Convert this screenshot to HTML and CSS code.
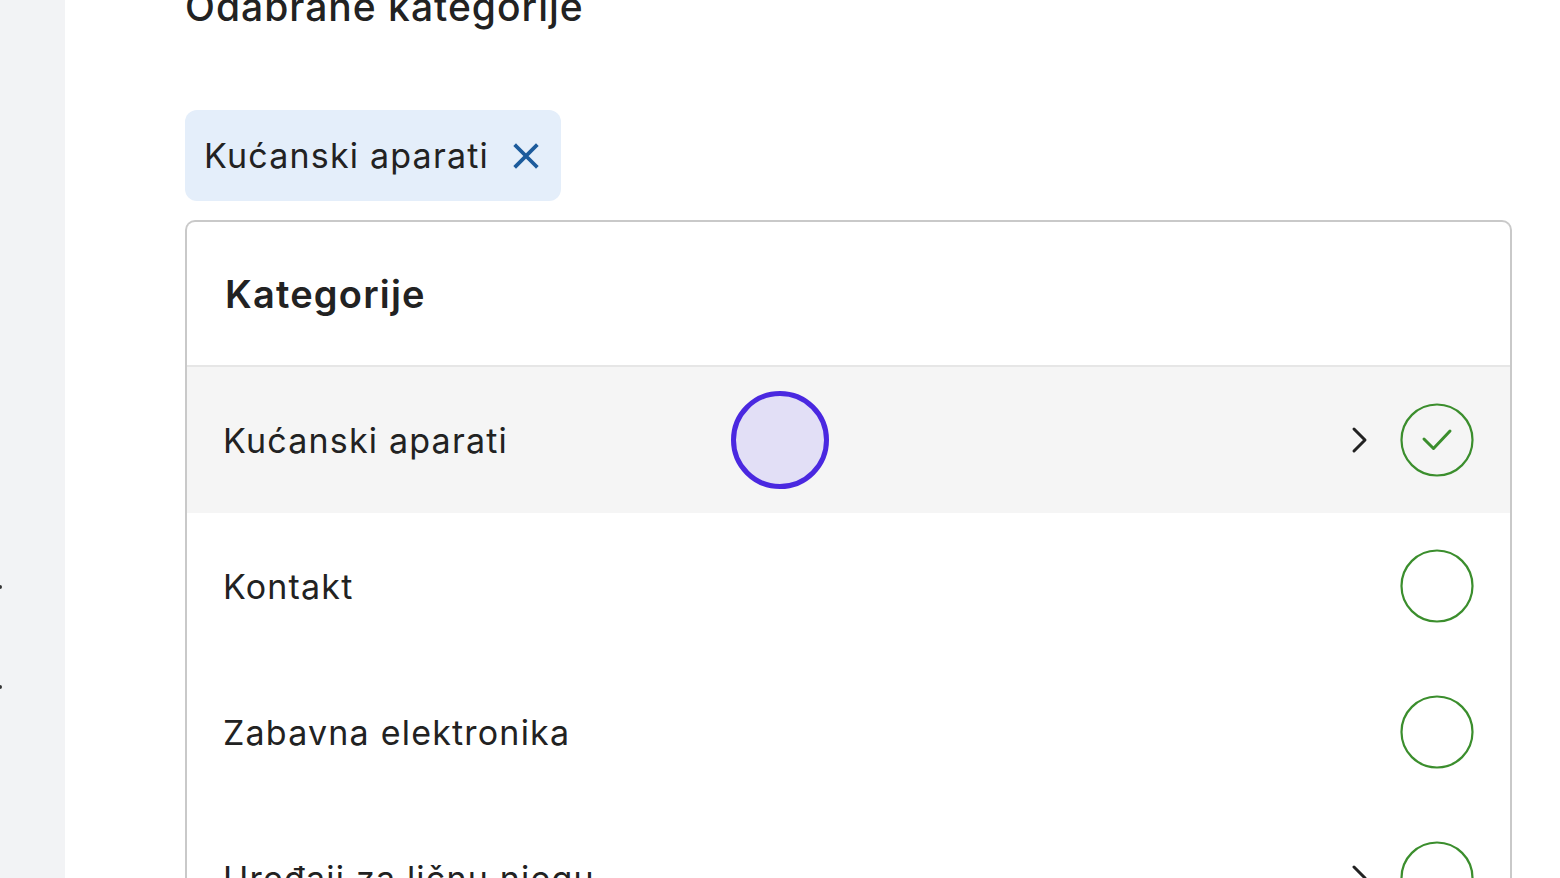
FILE: index.html
```html
<!DOCTYPE html>
<html lang="hr">
<head>
<meta charset="utf-8">
<title>Odabrane kategorije</title>
<link rel="stylesheet" href="styles.css">
</head>
<body>
<div class="app">
  <aside class="sidebar">
    <span class="dot dot-a"></span>
    <span class="dot dot-b"></span>
  </aside>
  <main class="main">
    <h1 class="page-title">Odabrane kategorije</h1>
    <div class="chips">
      <div class="chip">
        <span class="chip-label">Kućanski aparati</span>
        <svg class="chip-x" width="26" height="26" viewBox="0 0 26 26"><path d="M3 3L23 23M23 3L3 23" stroke="#1c5b9c" stroke-width="3.8" stroke-linecap="square" fill="none"/></svg>
      </div>
    </div>
    <section class="card">
      <header class="card-head">Kategorije</header>
      <ul class="list">
        <li class="row row-active">
          <span class="row-label">Kućanski aparati</span>
          <span class="row-tools">
            <svg class="chev" width="20" height="28" viewBox="0 0 20 28"><path d="M4 3L15 14L4 25" stroke="#222" stroke-width="3" fill="none" stroke-linecap="round" stroke-linejoin="round"/></svg>
            <svg class="radio" width="74" height="74" viewBox="0 0 74 74"><circle cx="37" cy="37" r="35.5" stroke="#3b8e2d" stroke-width="2.2" fill="none"/><path d="M24 36L33.5 45.5L50 28" stroke="#3b8e2d" stroke-width="3" fill="none" stroke-linecap="round" stroke-linejoin="round"/></svg>
          </span>
          <span class="cursor"></span>
        </li>
        <li class="row">
          <span class="row-label">Kontakt</span>
          <span class="row-tools">
            <svg class="radio" width="74" height="74" viewBox="0 0 74 74"><circle cx="37" cy="37" r="35.5" stroke="#3b8e2d" stroke-width="2.2" fill="none"/></svg>
          </span>
        </li>
        <li class="row">
          <span class="row-label">Zabavna elektronika</span>
          <span class="row-tools">
            <svg class="radio" width="74" height="74" viewBox="0 0 74 74"><circle cx="37" cy="37" r="35.5" stroke="#3b8e2d" stroke-width="2.2" fill="none"/></svg>
          </span>
        </li>
        <li class="row">
          <span class="row-label">Uređaji za ličnu njegu</span>
          <span class="row-tools">
            <svg class="chev" width="20" height="28" viewBox="0 0 20 28"><path d="M4 3L15 14L4 25" stroke="#222" stroke-width="3" fill="none" stroke-linecap="round" stroke-linejoin="round"/></svg>
            <svg class="radio" width="74" height="74" viewBox="0 0 74 74"><circle cx="37" cy="37" r="35.5" stroke="#3b8e2d" stroke-width="2.2" fill="none"/></svg>
          </span>
        </li>
      </ul>
    </section>
  </main>
</div>
</body>
</html>
```
FILE: styles.css
```css
html, body {
  margin: 0;
  padding: 0;
  height: 100%;
  overflow: hidden;
  background: #ffffff;
}
body {
  font-family: Inter, "Noto Sans", "Liberation Sans", sans-serif;
  color: #222222;
}
.app {
  display: flex;
  height: 878px;
}
.sidebar {
  width: 65px;
  flex: none;
  background: #f2f3f5;
  position: relative;
}
.dot {
  position: absolute;
  left: -2px;
  width: 4px;
  height: 4px;
  border-radius: 50%;
  background: #333;
}
.dot-a { top: 585px; }
.dot-b { top: 685px; }
.main {
  flex: 1;
  padding: 0 48px 0 120px;
  min-width: 0;
}
.page-title {
  margin: -16px 0 0 0;
  font-size: 39px;
  line-height: 46px;
  font-weight: 500;
  letter-spacing: 1px;
  color: #222;
}
.chips {
  display: flex;
  margin-top: 80px;
}
.chip {
  display: flex;
  align-items: center;
  gap: 24px;
  height: 91px;
  padding: 0 22px 0 19px;
  background: #e4eefa;
  border-radius: 12px;
  box-sizing: border-box;
}
.chip-label {
  font-size: 34px;
  letter-spacing: 1.2px;
  color: #222;
}
.card {
  margin-top: 19px;
  border: 2px solid #c9c9c9;
  border-radius: 10px;
  border-bottom: none;
  border-bottom-left-radius: 0;
  border-bottom-right-radius: 0;
  overflow: hidden;
}
.card-head {
  height: 143px;
  display: flex;
  align-items: center;
  padding-left: 38px;
  font-size: 38px;
  font-weight: 600;
  letter-spacing: 1.2px;
  color: #222;
  border-bottom: 2px solid #e6e6e6;
}
.list {
  list-style: none;
  margin: 0;
  padding: 0;
}
.row {
  height: 146px;
  display: flex;
  align-items: center;
  justify-content: space-between;
  padding: 0 36px 0 36px;
  position: relative;
}
.row-active {
  background: #f5f5f5;
}
.row-label {
  font-size: 34px;
  letter-spacing: 1.2px;
  color: #222;
}
.row-tools {
  display: flex;
  align-items: center;
  gap: 30px;
}
.chev, .radio {
  display: block;
}
.cursor {
  position: absolute;
  left: 544px;
  top: 24px;
  width: 88px;
  height: 88px;
  border-radius: 50%;
  border: 5px solid #4a28e0;
  background: #e2dff6;
}
```
